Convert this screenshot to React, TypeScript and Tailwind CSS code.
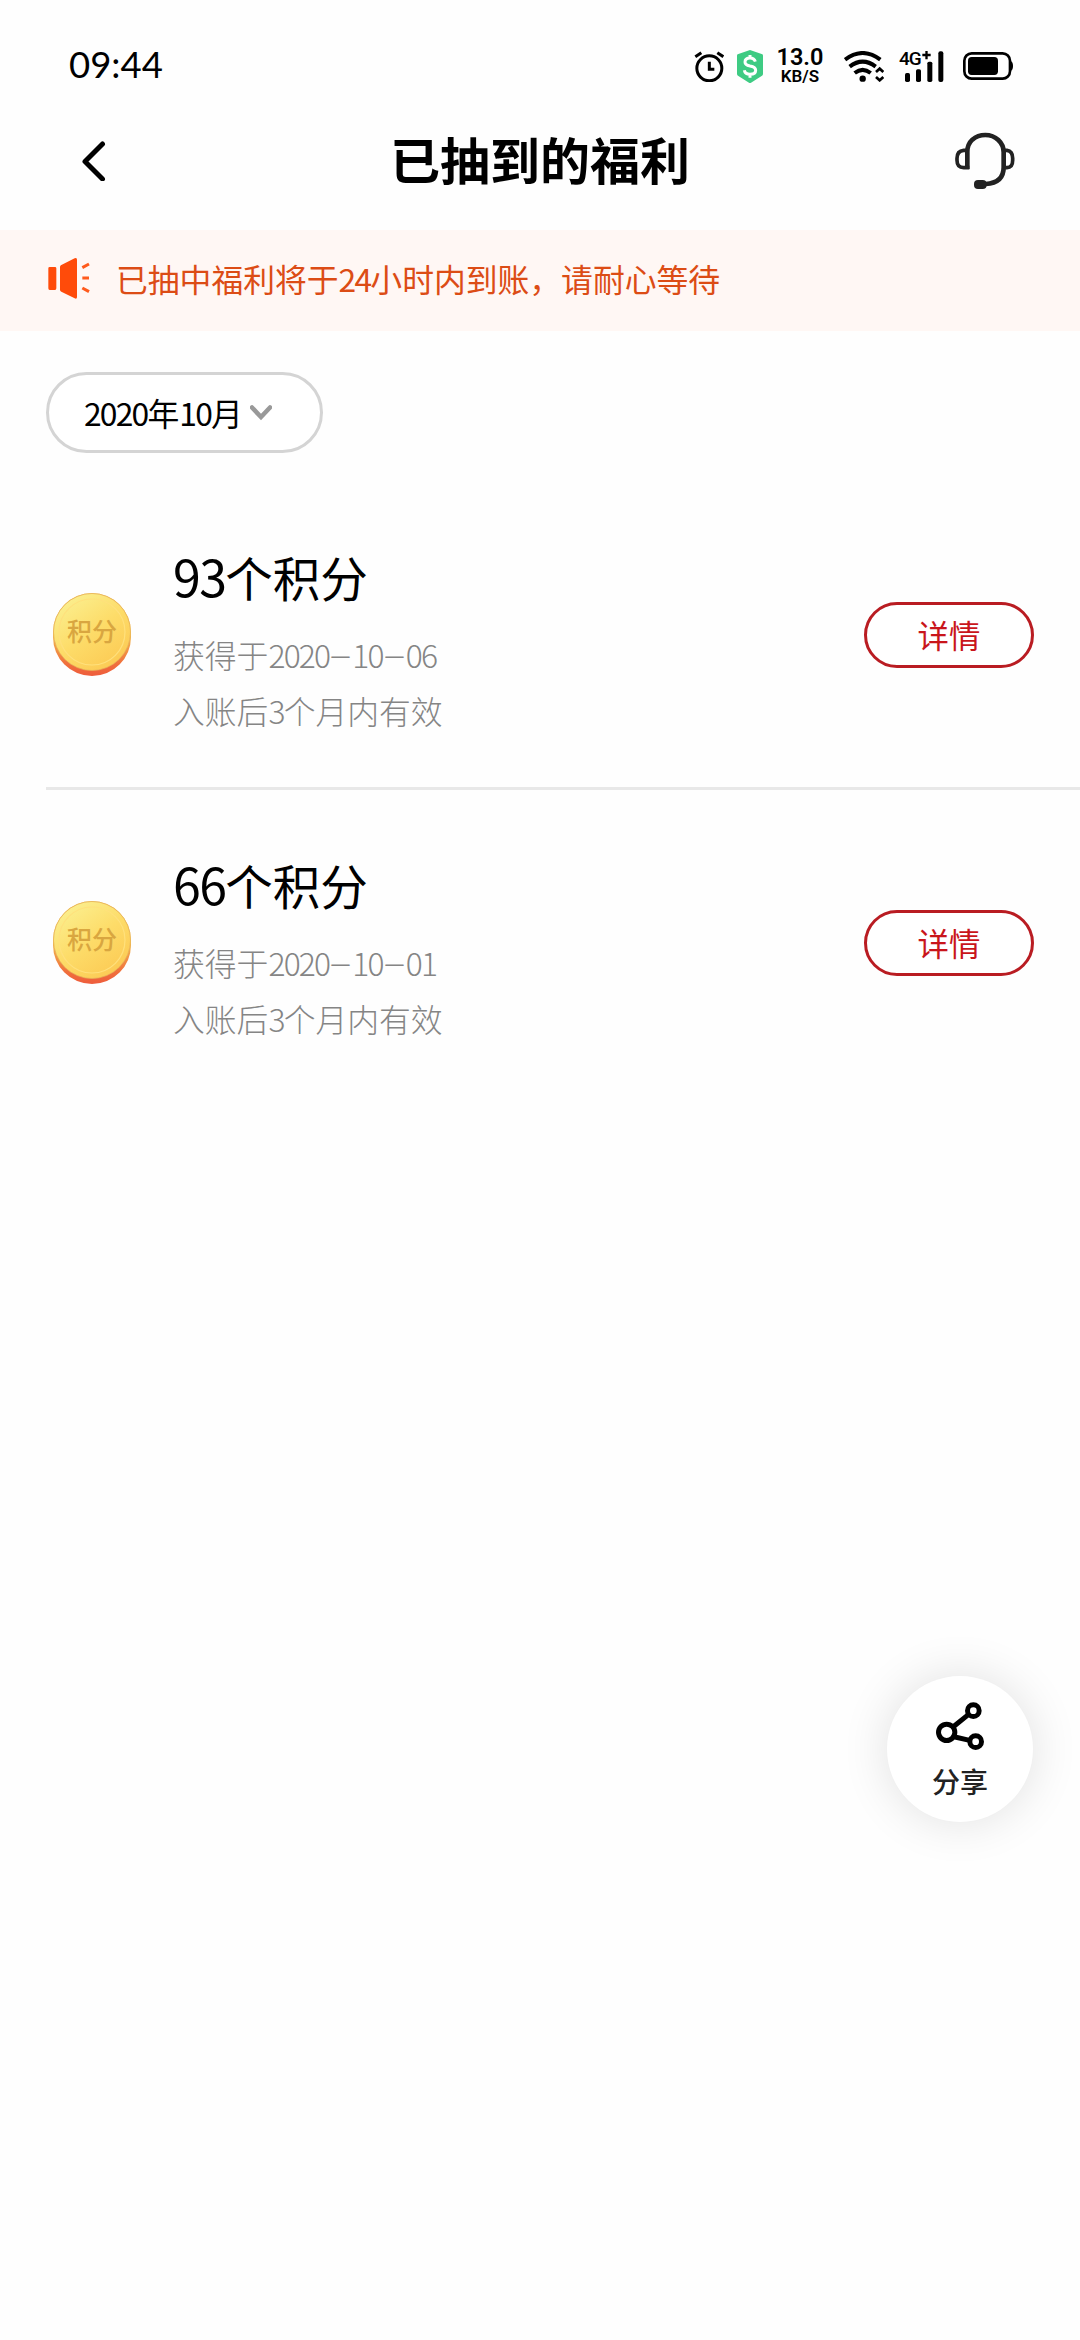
import type { ReactNode } from 'react';

const records = [
  { id: 1, amount: '93', date: ['2020', '10', '06'] },
  { id: 2, amount: '66', date: ['2020', '10', '01'] },
];

function Num({ children }: { children: ReactNode }) {
  return <span className="tracking-[-0.056em]">{children}</span>;
}

function AlarmIcon() {
  return (
    <svg className="h-[31px] w-[30px]" viewBox="38 47 90 93" fill="none" stroke="#000">
      <circle cx="84" cy="99" r="37.500" strokeWidth="9" />
      <path d="M84 79v23h15" strokeWidth="9" />
      <path d="M42 64l18-12M126 64l-18-12" strokeWidth="9" />
    </svg>
  );
}

function ShieldIcon() {
  return (
    <svg className="h-[33px] w-[26px]" viewBox="168 41 78 99">
      <path
        d="M207 41l37 13q2 1 2 4v54q0 4-3 6l-33 21q-3 2-6 0l-33-21q-3-2-3-6V58q0-3 2-4z"
        fill="#3ecb83"
      />
      <path
        d="M223 76q-3-11-16-11-15 0-15 12 0 9 15 12 17 3 17 13 0 12-17 12-15 0-17-12M207 56v10M207 113v11"
        fill="none"
        stroke="#fff"
        strokeWidth="9"
      />
    </svg>
  );
}

function WifiIcon() {
  return (
    <svg className="h-[31px] w-[40px]" viewBox="37 46 120 93" fill="none" stroke="#000" strokeWidth="12">
      <path d="M40 72q53-40 106 0M54 93q39-30 78 0M69 112q24-19 48 0" />
      <circle cx="93" cy="129" r="9.500" fill="#000" stroke="none" />
      <path d="M133 109l11-10 11 10M133 124l11 10 11-10" strokeWidth="8" />
    </svg>
  );
}

function SignalIcon() {
  return (
    <div className="relative h-[31px] w-[45px]">
      <svg className="h-[31px] w-[45px]" viewBox="203 46 135 93">
        <rect x="221" y="112" width="15" height="27" rx="5" />
        <rect x="254" y="101" width="15" height="38" rx="5" />
        <rect x="288" y="78" width="15" height="61" rx="5" />
        <rect x="321" y="47" width="15" height="92" rx="6" />
        <path d="M273 58h25M285.500 46v25" stroke="#000" strokeWidth="7" />
      </svg>
      <span className="absolute top-[-1px] left-0 text-[19px] leading-[18px] font-medium tracking-[-1px]">4G</span>
    </div>
  );
}

function BatteryIcon() {
  return (
    <svg className="h-[28px] w-[50px]" viewBox="393 51 150 84">
      <rect x="397" y="55" width="137" height="76" rx="22" fill="none" stroke="#000" strokeWidth="8" />
      <rect x="408" y="66" width="90" height="54" rx="11" />
      <path d="M535 78q8 2 8 15t-8 15z" />
    </svg>
  );
}

function HeadsetIcon() {
  return (
    <svg className="h-[58px] w-[62px]" viewBox="70 69 186 174" fill="none" stroke="#222" strokeWidth="14">
      <path d="M110 180v-52q0-22 15-36 16-14 39-14 23 0 39 15 16 15 16 37v45q0 47-54 50" />
      <path d="M110 124h-11q-20 2-20 24v6q0 22 20 22h17M222 124h7q17 2 17 24v6q0 22-17 22h-10" strokeWidth="11" />
      <rect x="130" y="213" width="38" height="27" rx="12" fill="#222" stroke="none" />
    </svg>
  );
}

function SpeakerIcon() {
  return (
    <svg className="mb-[3px] h-[42px] w-[43px]" viewBox="144 115 129 126">
      <path
        d="M149 142h16q4 0 4 4v60q0 5-4 5h-16q-4 0-4-5v-60q0-4 4-4zM180 142q0-4 4-6l40-20q7-3 7 4v112q0 7-7 4l-40-20q-4-2-4-6z"
        fill="#ff4b0a"
      />
      <path d="M247 144l20-11M247 175h20M247 205l20 11" stroke="#ff5a1c" strokeWidth="9" />
    </svg>
  );
}

function Coin() {
  return (
    <svg className="h-[86px] w-[80px]" viewBox="0 0 80 86">
      <defs>
        <linearGradient id="edge" x1="0" y1="0" x2="0" y2="1">
          <stop offset="0.5" stopColor="#f3bb4e" />
          <stop offset="0.85" stopColor="#f0703c" />
          <stop offset="1" stopColor="#ee5c3c" />
        </linearGradient>
        <linearGradient id="face" x1="0.15" y1="0.1" x2="0.75" y2="0.95">
          <stop offset="0" stopColor="#fbee8d" />
          <stop offset="0.5" stopColor="#fddc69" />
          <stop offset="1" stopColor="#fccb55" />
        </linearGradient>
      </defs>
      <path d="M1 40a39 39 0 0 1 78 0v5a39 39 0 0 1-78 0z" fill="url(#edge)" />
      <circle cx="40" cy="40" r="38.500" fill="url(#face)" stroke="#e5b25a" strokeWidth="0.700" />
      <circle cx="40" cy="40" r="33" fill="none" stroke="#ffe07c" strokeWidth="1.200" />
      <text x="40" y="49" textAnchor="middle" fontSize="25" fontWeight="500" fill="#d9a640">
        积分
      </text>
    </svg>
  );
}

function ShareIcon() {
  return (
    <svg className="h-[49px] w-[48px]" viewBox="258 185 144 147" fill="none" stroke="#000" strokeWidth="15">
      <circle cx="370" cy="211" r="17.500" />
      <circle cx="290" cy="276" r="24.500" />
      <circle cx="377" cy="304" r="17.500" />
      <path d="M309 260l46-37M315 290l44 10" />
    </svg>
  );
}

function StatusBar() {
  return (
    <div className="flex h-[108px] items-center pt-6 pr-[67px] pl-[69px] font-['Roboto','Noto_Sans_CJK_SC',sans-serif] text-black">
      <span className="mb-[3px] font-['Lato',sans-serif] text-[36.500px] leading-none">09:44</span>
      <div className="ml-auto flex items-center">
        <AlarmIcon />
        <div className="ml-[13px]">
          <ShieldIcon />
        </div>
        <div className="ml-[12px] flex w-[50px] flex-col items-center font-semibold">
          <span className="text-[23.500px] leading-[20px]">13.0</span>
          <span className="text-[17px] leading-[19px]">KB/S</span>
        </div>
        <div className="ml-[19px]">
          <WifiIcon />
        </div>
        <div className="ml-[15px]">
          <SignalIcon />
        </div>
        <div className="ml-[19px]">
          <BatteryIcon />
        </div>
      </div>
    </div>
  );
}

export default function App() {
  return (
    <div className="relative h-[2340px] w-[1080px] overflow-hidden bg-[#fefefe] font-['Noto_Sans_CJK_SC',sans-serif]">
      <StatusBar />

      <header className="grid h-[122px] grid-cols-[1fr_auto_1fr] items-center pr-[64px] pb-[16px] pl-[82px]">
        <svg className="h-[40px] w-[24px]" viewBox="0 0 24 40" fill="none" stroke="#000" strokeWidth="5" strokeLinecap="round">
          <path d="M20.500 3L3 20.500 20.500 38" strokeLinejoin="round" />
        </svg>
        <h1 className="mr-[18px] mb-[7px] text-[50px] leading-none font-bold text-black">已抽到的福利</h1>
        <div className="justify-self-end">
          <HeadsetIcon />
        </div>
      </header>

      <div className="flex h-[101px] items-center bg-[#fff7f4] pl-[48px] text-[#dc4c15]">
        <SpeakerIcon />
        <p className="mb-[3px] ml-[25px] text-[31.800px] leading-none">
          已抽中福利将于<Num>24</Num>小时内到账，请耐心等待
        </p>
      </div>

      <button className="mt-[41px] ml-[46px] flex h-[81px] w-[277px] items-center rounded-full border-[3px] border-[#d4d4d4] bg-white pl-[35px] text-[31.800px] leading-none text-black">
        <span>
          <Num>2020</Num>年<Num>10</Num>月
        </span>
        <svg className="ml-[7px] h-[16px] w-[22px]" viewBox="0 0 22 16" fill="none" stroke="#999" strokeWidth="4.500">
          <path d="M2 2.500l9 9.500 9-9.500" strokeLinecap="round" />
        </svg>
      </button>

      <ul className="mt-[29px]">
        {records.map((record) => (
          <li
            key={record.id}
            className="ml-[46px] flex h-[308px] items-center border-b-[3px] border-[#e8e8e8] pr-[46px] pl-[6px] last:border-transparent"
          >
            <Coin />
            <div className="ml-[41px] pt-[10px]">
              <h2 className="text-[47.500px] leading-[70px] text-black">
                <span className="text-[50px] leading-none tracking-[-0.032em]">{record.amount}</span>个积分
              </h2>
              <p className="mt-[14px] text-[31.800px] leading-[56px] font-light text-[#858585]">
                获得于
                {record.date.map((part, i) => (
                  <span key={i}>
                    {i > 0 && (
                      <span className="inline-block w-[23px] -translate-y-[2px] scale-x-130 text-center">–</span>
                    )}
                    <Num>{part}</Num>
                  </span>
                ))}
              </p>
              <p className="text-[31.800px] leading-[56px] font-light text-[#858585]">
                入账后<Num>3</Num>个月内有效
              </p>
            </div>
            <button className="ml-auto h-[66px] w-[170px] rounded-full border-[3px] border-[#b91c22] bg-white text-[31.400px] leading-none text-[#c9151b]">
              详情
            </button>
          </li>
        ))}
      </ul>

      {/* floating share button */}
      <button className="absolute top-[1676px] left-[887px] flex h-[146px] w-[146px] flex-col items-center rounded-full bg-white pt-[26px] shadow-[0_0_48px_rgba(0,0,0,0.12)]">
        <ShareIcon />
        <span className="mt-[16px] text-[28px] leading-[28px] font-medium text-[#222]">分享</span>
      </button>
    </div>
  );
}
